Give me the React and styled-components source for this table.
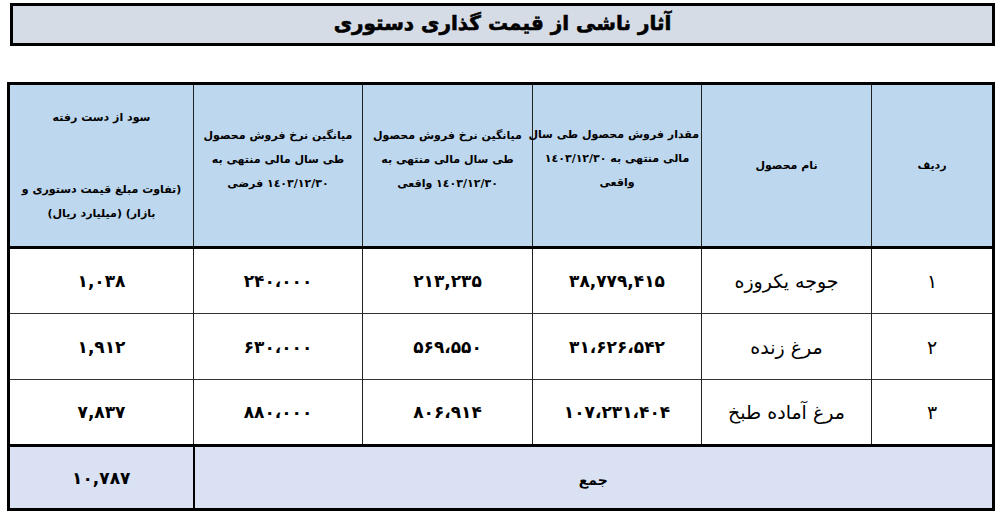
import React from "react";
import styled, { createGlobalStyle } from "styled-components";

const GlobalStyle = createGlobalStyle`
  html, body {
    margin: 0;
    padding: 0;
    background: #ffffff;
  }
  body {
    font-family: "DejaVu Sans", "Noto Sans", sans-serif;
    color: #000;
  }
`;

const Page = styled.div`
  width: 1000px;
  height: 521px;
  box-sizing: border-box;
  padding: 3px 5px 0 10px;
  display: flex;
  flex-direction: column;
  gap: 36px;
  direction: rtl;
`;

const TitleBox = styled.div`
  height: 43px;
  box-sizing: border-box;
  border: 3px solid #000;
  background: #d6dce5;
  display: flex;
  align-items: center;
  justify-content: center;
  padding-bottom: 3px;
`;

const TitleText = styled.h1`
  margin: 0;
  font-family: "DejaVu Sans", sans-serif;
  font-size: 20px;
  font-weight: bold;
  -webkit-text-stroke: 0.6px #000;
`;

const Table = styled.table`
  width: 985px;
  border-collapse: collapse;
  table-layout: fixed;
  border: 3px solid #000;
  direction: rtl;
`;

const HeadRow = styled.tr`
  height: 164px;
  background: #bdd7ee;
  border-bottom: 3px solid #000;
`;

const BodyRow = styled.tr`
  height: 66px;
  background: #fff;
  border-bottom: 1.5px solid #333;
`;

const FootRow = styled.tr`
  height: 64px;
  background: #d9e1f2;
  border-top: 3px solid #000;
`;

const HeadCell = styled.th`
  border-left: 1.5px solid #222;
  padding: 0 2px ${(p) => p.$lift || 0}px;
  font-size: 11px;
  font-weight: bold;
  line-height: 24px;
  text-align: center;
  vertical-align: middle;
  white-space: nowrap;
`;

const Cell = styled.td`
  border-left: ${(p) => (p.$thick ? "2px solid #000" : "1.5px solid #222")};
  padding: 0 4px;
  text-align: center;
  vertical-align: middle;
  font-size: ${(p) => (p.$num ? "17px" : "19px")};
  font-weight: ${(p) => (p.$num ? "bold" : "normal")};
  white-space: nowrap;
`;

const Num = styled.span`
  direction: ltr;
  unicode-bidi: isolate;
`;

const Label = styled.span`
  font-size: 14px;
  font-weight: bold;
`;

const rows = [
  ["۱", "جوجه یکروزه", "۳۸,۷۷۹,۴۱۵", "۲۱۳,۲۳۵", "۲۴۰،۰۰۰", "۱,۰۳۸"],
  ["۲", "مرغ زنده", "۳۱،۶۲۶،۵۴۲", "۵۶۹،۵۵۰", "۶۳۰،۰۰۰", "۱,۹۱۲"],
  ["۳", "مرغ آماده طبخ", "۱۰۷،۲۳۱،۴۰۴", "۸۰۶،۹۱۴", "۸۸۰،۰۰۰", "۷,۸۳۷"],
];

export default function App() {
  return (
    <>
      <GlobalStyle />
      <Page>
        <TitleBox>
          <TitleText>آثار ناشی از قیمت گذاری دستوری</TitleText>
        </TitleBox>

        <Table>
          <colgroup>
            <col style={{ width: 122 }} />
            <col style={{ width: 170 }} />
            <col style={{ width: 169 }} />
            <col style={{ width: 170 }} />
            <col style={{ width: 169 }} />
            <col style={{ width: 185 }} />
          </colgroup>
          <thead>
            <HeadRow>
              <HeadCell>ردیف</HeadCell>
              <HeadCell>نام محصول</HeadCell>
              <HeadCell $lift={14}>
                مقدار فروش محصول طی سال
                <br />
                مالی منتهی به ١٤٠٣/١٢/٣٠
                <br />
                واقعی
              </HeadCell>
              <HeadCell $lift={12}>
                میانگین نرخ فروش محصول
                <br />
                طی سال مالی منتهی به
                <br />
                ١٤٠٣/١٢/٣٠ واقعی
              </HeadCell>
              <HeadCell $lift={12}>
                میانگین نرخ فروش محصول
                <br />
                طی سال مالی منتهی به
                <br />
                ١٤٠٣/١٢/٣٠ فرضی
              </HeadCell>
              <HeadCell>
                سود از دست رفته
                <br />
                <br />
                <br />
                (تفاوت مبلغ قیمت دستوری و
                <br />
                بازار) (میلیارد ریال)
              </HeadCell>
            </HeadRow>
          </thead>
          <tbody>
            {rows.map((r) => (
              <BodyRow key={r[0]}>
                <Cell>{r[0]}</Cell>
                <Cell>{r[1]}</Cell>
                {r.slice(2).map((v, i) => (
                  <Cell key={i} $num>
                    <Num>{v}</Num>
                  </Cell>
                ))}
              </BodyRow>
            ))}
            <FootRow>
              <Cell colSpan={5} $thick>
                <Label>جمع</Label>
              </Cell>
              <Cell $num>
                <Num>۱۰,۷۸۷</Num>
              </Cell>
            </FootRow>
          </tbody>
        </Table>
      </Page>
    </>
  );
}
